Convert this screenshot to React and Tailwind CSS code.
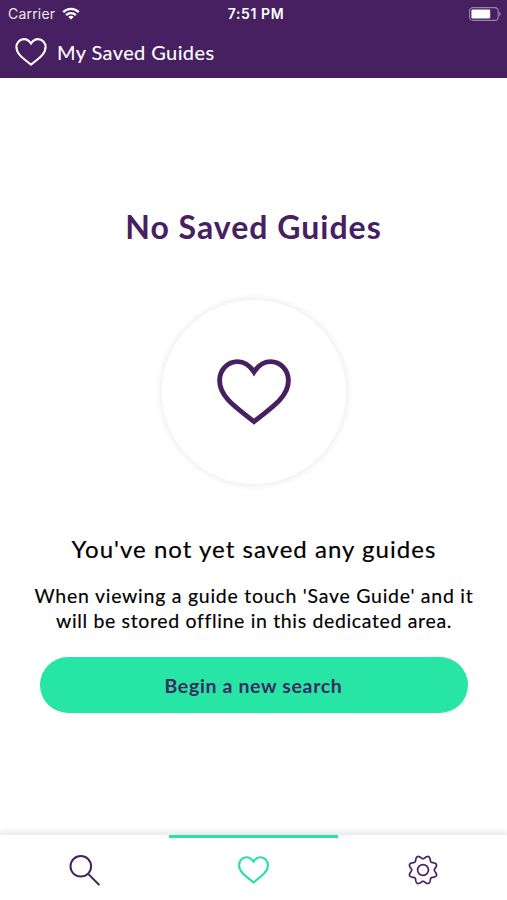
import React, { useState } from 'react'

const HeartIcon = ({ className }) => (
    <svg viewBox="0 0 74 66" fill="none" stroke="currentColor" strokeWidth="4.9" className={className}>
        <path d="M37 13C32.5 6 27 2.6 20.5 2.6C10.5 2.6 2.6 11 2.6 21.5C2.6 36 14 45 37 62.6C60 45 71.4 36 71.4 21.5C71.4 11 63.5 2.6 53.5 2.6C47 2.6 41.5 6 37 13Z" />
    </svg>
)

const SearchIcon = () => (
    <svg viewBox="0 0 31 31" fill="none" stroke="currentColor" strokeWidth="2" strokeLinecap="round" className="w-[31px] h-[31px]">
        <circle cx="11.8" cy="11.3" r="10.3" />
        <path d="M19.2 18.9L29.8 29.5" />
    </svg>
)

// eight rounded teeth around the hub
const gearPoints = Array.from({ length: 160 }, (_, i) => {
    const angle = (i / 160) * Math.PI * 2
    const r = 12.9 - 1.6 * Math.cos(angle * 8)
    return `${(16 + r * Math.cos(angle)).toFixed(2)},${(16 + r * Math.sin(angle)).toFixed(2)}`
}).join(' ')

const GearIcon = () => (
    <svg viewBox="0 0 32 32" fill="none" stroke="currentColor" strokeWidth="1.7" strokeLinejoin="round" className="w-8 h-8">
        <polygon points={gearPoints} />
        <circle cx="16" cy="16" r="5.4" />
    </svg>
)

const WifiIcon = () => (
    <svg viewBox="0 0 18 13" fill="none" stroke="currentColor" strokeWidth="2.3" className="w-[18px] h-[13px]">
        <path d="M1.2 5.1C5.6 0.8 12.4 0.8 16.8 5.1" />
        <path d="M4.1 8.1C6.9 5.4 11.1 5.4 13.9 8.1" />
        <path d="M9 12.6L6.3 9.9C7.8 8.5 10.2 8.5 11.7 9.9Z" fill="currentColor" stroke="none" />
    </svg>
)

const BatteryIcon = () => (
    <svg viewBox="0 0 32 14" className="w-8 h-[14px]">
        <rect x="0.6" y="0.6" width="28.6" height="12.8" rx="3.4" fill="none" stroke="white" strokeOpacity="0.45" strokeWidth="1.1" />
        <rect x="2.4" y="2.4" width="18.8" height="9.2" rx="1.4" fill="white" />
        <path d="M30.3 4.8C31.9 5.4 31.9 8.6 30.3 9.2Z" fill="white" fillOpacity="0.5" />
    </svg>
)

const tabs = [
    { id: 'search', label: 'Search', icon: <SearchIcon /> },
    { id: 'saved', label: 'Saved guides', icon: <HeartIcon className="w-[31px] h-7" /> },
    { id: 'settings', label: 'Settings', icon: <GearIcon /> },
]

const App = () => {
    const [active, setActive] = useState('saved')

    return (
        <div className="w-full h-screen flex flex-col overflow-hidden bg-white font-['Lato',sans-serif] text-black">
            <header className="h-[78px] shrink-0 bg-[#472061] text-white">
                <div className="h-[27px] grid grid-cols-[1fr_auto_1fr] items-center pl-2 pr-[6px] font-['Inter',sans-serif] text-[14px]">
                    <div className="flex items-center gap-[7px]">
                        <span className="tracking-[0.2px] opacity-90">Carrier</span>
                        <WifiIcon />
                    </div>
                    <span className="pl-[3px] text-[14px] font-semibold tracking-[0.6px] whitespace-nowrap">7:51 PM</span>
                    <div className="flex justify-end">
                        <BatteryIcon />
                    </div>
                </div>
                <div className="flex items-center h-[50px] pl-[15px] gap-[10px]">
                    <HeartIcon className="w-8 h-7" />
                    <h1 className="text-[20px] tracking-[0.4px] whitespace-nowrap [-webkit-text-stroke:0.1px]">My Saved Guides</h1>
                </div>
            </header>

            <main className="flex-1 flex flex-col items-center">
                <h2 className="mt-[129px] h-10 leading-10 text-[32px] font-bold tracking-[1px] text-[#472061] whitespace-nowrap">
                    No Saved Guides
                </h2>
                <div className="mt-[53px] w-[184px] h-[184px] shrink-0 rounded-full flex items-center justify-center text-[#472061] shadow-[0_0_7px_2px_rgba(0,0,0,0.07)]">
                    <HeartIcon className="w-[74px] h-[66px]" />
                </div>
                <h3 className="mt-[49px] h-8 leading-8 pl-px text-[24px] tracking-[1.03px] whitespace-nowrap [-webkit-text-stroke:0.2px]">
                    You've not yet saved any guides
                </h3>
                <p className="mt-[18px] pl-px text-center text-[19.5px] leading-[25px] whitespace-nowrap [-webkit-text-stroke:0.15px]">
                    <span className="tracking-[0.74px]">When viewing a guide touch 'Save Guide' and it</span>
                    <br />
                    <span className="tracking-[0.65px]">will be stored offline in this dedicated area.</span>
                </p>
                <button
                    type="button"
                    className="mt-6 w-[428px] h-[56px] pt-px rounded-full bg-[#27e5a4] text-[#3a2c63] text-[19.5px] font-bold tracking-[0.65px]"
                >
                    Begin a new search
                </button>
            </main>

            <nav className="h-[65px] shrink-0 grid grid-cols-3 bg-white shadow-[0_-2px_7px_1px_rgba(0,0,0,0.1)]">
                {tabs.map((tab) => (
                    <button
                        key={tab.id}
                        type="button"
                        aria-label={tab.label}
                        onClick={() => setActive(tab.id)}
                        className={`flex items-center justify-center border-t-[3px] pt-0.5 ${active === tab.id
                            ? 'border-[#27e5a4] text-[#27dfa0]'
                            : 'border-transparent text-[#472061]'
                            }`}
                    >
                        {tab.icon}
                    </button>
                ))}
            </nav>
        </div>
    )
}

export default App
